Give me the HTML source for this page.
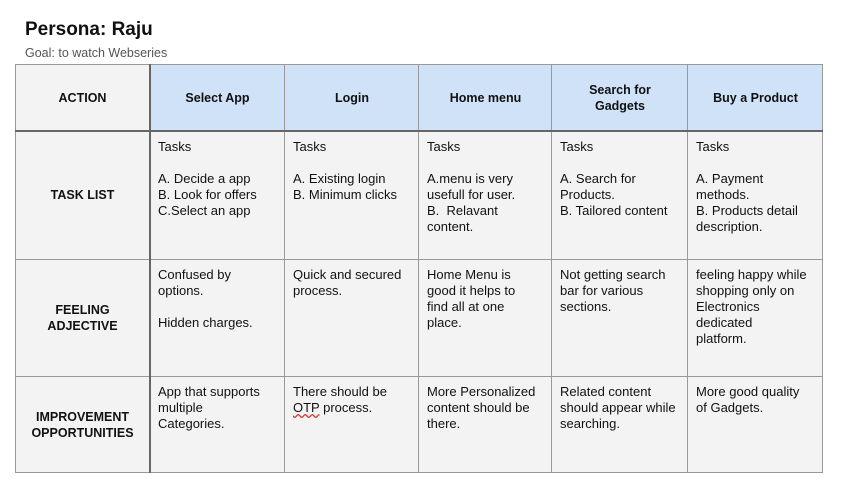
<!DOCTYPE html>
<html><head><meta charset="utf-8"><style>
body{margin:0;background:#fff;width:857px;height:483px;position:relative;font-family:"Liberation Sans",Arial,sans-serif;color:#111;overflow:hidden}
.t{position:absolute;left:25px;top:19px;font-size:19px;font-weight:bold}
.g{position:absolute;left:25px;top:46px;font-size:12.5px;color:#555}
.c{position:absolute;box-sizing:border-box;background:#f3f3f3;font-size:13px;line-height:16px;white-space:nowrap}
.h{background:#cfe2f8}
.cb{display:flex;align-items:center;justify-content:center;text-align:center;font-weight:bold;font-size:12.5px}
.tx{padding:8px 8px 0 8px}
.l{position:absolute;background:#999}
.k{position:absolute;background:#666}
</style></head><body>
<div class="t">Persona: Raju</div>
<div class="g">Goal: to watch Webseries</div>

<div class="c cb" style="left:15px;top:64px;width:135px;height:67px">ACTION</div>
<div class="c h cb" style="left:150px;top:64px;width:135px;height:67px">Select App</div>
<div class="c h cb" style="left:285px;top:64px;width:134px;height:67px">Login</div>
<div class="c h cb" style="left:419px;top:64px;width:133px;height:67px">Home menu</div>
<div class="c h cb" style="left:552px;top:64px;width:136px;height:67px">Search for<br>Gadgets</div>
<div class="c h cb" style="left:688px;top:64px;width:135px;height:67px">Buy a Product</div>

<div class="c cb" style="left:15px;top:131px;width:135px;height:128px">TASK LIST</div>
<div class="c tx" style="left:150px;top:131px;width:135px;height:128px">Tasks<br><br>A. Decide a app<br>B. Look for offers<br>C.Select an app</div>
<div class="c tx" style="left:285px;top:131px;width:134px;height:128px">Tasks<br><br>A. Existing login<br>B. Minimum clicks</div>
<div class="c tx" style="left:419px;top:131px;width:133px;height:128px">Tasks<br><br>A.menu is very<br>usefull for user.<br>B.&nbsp; Relavant<br>content.</div>
<div class="c tx" style="left:552px;top:131px;width:136px;height:128px">Tasks<br><br>A. Search for<br>Products.<br>B. Tailored content</div>
<div class="c tx" style="left:688px;top:131px;width:135px;height:128px">Tasks<br><br>A. Payment<br>methods.<br>B. Products detail<br>description.</div>

<div class="c cb" style="left:15px;top:259px;width:135px;height:117px">FEELING<br>ADJECTIVE</div>
<div class="c tx" style="left:150px;top:259px;width:135px;height:117px">Confused by<br>options.<br><br>Hidden charges.</div>
<div class="c tx" style="left:285px;top:259px;width:134px;height:117px">Quick and secured<br>process.</div>
<div class="c tx" style="left:419px;top:259px;width:133px;height:117px">Home Menu is<br>good it helps to<br>find all at one<br>place.</div>
<div class="c tx" style="left:552px;top:259px;width:136px;height:117px">Not getting search<br>bar for various<br>sections.</div>
<div class="c tx" style="left:688px;top:259px;width:135px;height:117px">feeling happy while<br>shopping only on<br>Electronics<br>dedicated<br>platform.</div>

<div class="c cb" style="left:15px;top:376px;width:135px;height:97px">IMPROVEMENT<br>OPPORTUNITIES</div>
<div class="c tx" style="left:150px;top:376px;width:135px;height:97px">App that supports<br>multiple<br>Categories.</div>
<div class="c tx" style="left:285px;top:376px;width:134px;height:97px">There should be<br><span style="text-decoration:underline wavy #d33">OTP</span> process.</div>
<div class="c tx" style="left:419px;top:376px;width:133px;height:97px">More Personalized<br>content should be<br>there.</div>
<div class="c tx" style="left:552px;top:376px;width:136px;height:97px">Related content<br>should appear while<br>searching.</div>
<div class="c tx" style="left:688px;top:376px;width:135px;height:97px">More good quality<br>of Gadgets.</div>

<div class="l" style="left:15px;top:64px;width:808px;height:1px"></div>
<div class="l" style="left:15px;top:259px;width:808px;height:1px"></div>
<div class="l" style="left:15px;top:376px;width:808px;height:1px"></div>
<div class="l" style="left:15px;top:472px;width:808px;height:1px"></div>
<div class="l" style="left:15px;top:64px;width:1px;height:409px"></div>
<div class="l" style="left:284px;top:64px;width:1px;height:409px"></div>
<div class="l" style="left:418px;top:64px;width:1px;height:409px"></div>
<div class="l" style="left:551px;top:64px;width:1px;height:409px"></div>
<div class="l" style="left:687px;top:64px;width:1px;height:409px"></div>
<div class="l" style="left:822px;top:64px;width:1px;height:409px"></div>
<div class="k" style="left:149px;top:64px;width:2px;height:409px"></div>
<div class="k" style="left:15px;top:130px;width:808px;height:2px"></div>
</body></html>
